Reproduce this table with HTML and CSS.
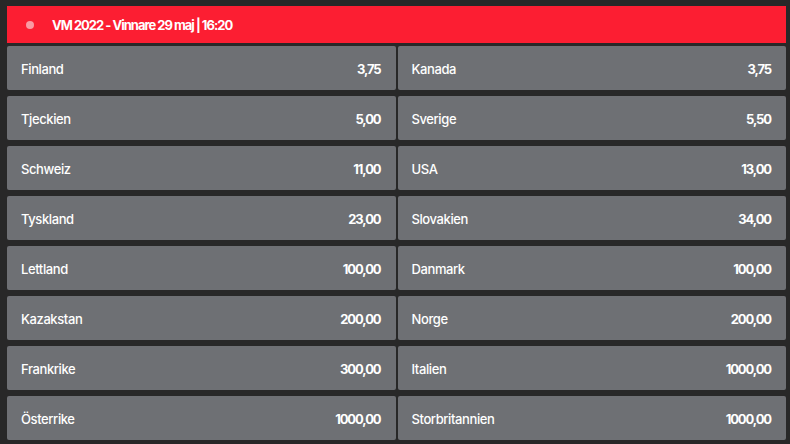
FILE: index.html
```html
<!DOCTYPE html>
<html lang="sv">
<head>
    <meta charset="UTF-8">
    <meta name="viewport" content="width=device-width, initial-scale=1.0">
    <title>VM 2022 - Vinnare</title>
    <link rel="stylesheet" href="styles.css">
</head>
<body>

<div class="marknad">
    <div class="rubrik">
        <span class="punkt"></span>
        <span>VM 2022 - Vinnare 29 maj | 16:20</span>
    </div>

    <div class="rad">
        <div class="val"><span>Finland</span><span class="odds">3,75</span></div>
        <div class="val"><span>Kanada</span><span class="odds">3,75</span></div>
    </div>
    <div class="rad">
        <div class="val"><span>Tjeckien</span><span class="odds">5,00</span></div>
        <div class="val"><span>Sverige</span><span class="odds">5,50</span></div>
    </div>
    <div class="rad">
        <div class="val"><span>Schweiz</span><span class="odds">11,00</span></div>
        <div class="val"><span>USA</span><span class="odds">13,00</span></div>
    </div>
    <div class="rad">
        <div class="val"><span>Tyskland</span><span class="odds">23,00</span></div>
        <div class="val"><span>Slovakien</span><span class="odds">34,00</span></div>
    </div>
    <div class="rad">
        <div class="val"><span>Lettland</span><span class="odds">100,00</span></div>
        <div class="val"><span>Danmark</span><span class="odds">100,00</span></div>
    </div>
    <div class="rad">
        <div class="val"><span>Kazakstan</span><span class="odds">200,00</span></div>
        <div class="val"><span>Norge</span><span class="odds">200,00</span></div>
    </div>
    <div class="rad">
        <div class="val"><span>Frankrike</span><span class="odds">300,00</span></div>
        <div class="val"><span>Italien</span><span class="odds">1000,00</span></div>
    </div>
    <div class="rad">
        <div class="val"><span>Österrike</span><span class="odds">1000,00</span></div>
        <div class="val"><span>Storbritannien</span><span class="odds">1000,00</span></div>
    </div>
</div>

</body>
</html>
```

FILE: styles.css
```css
* {
    box-sizing: border-box;
}

body {
    margin: 0;
    background: #282828;
    font-family: Inter, "Noto Sans", sans-serif;
    color: white;
    letter-spacing: -0.4px;
}

.marknad {
    padding: 6px 4px 0 7px;
    display: flex;
    flex-direction: column;
    gap: 6px;
}

.rubrik {
    background: #fc1e32;
    height: 37px;
    display: flex;
    align-items: center;
    padding-left: 19px;
    font-size: 13px;
    font-weight: 700;
    letter-spacing: -1px;
    margin-bottom: -3px;
}

.punkt {
    width: 8px;
    height: 8px;
    border-radius: 50%;
    background: #f99aa3;
    margin-right: 18px;
}

.rad {
    display: grid;
    grid-template-columns: 1fr 1fr;
    gap: 2px;
}

.val {
    background: #6e7074;
    height: 44px;
    border-radius: 2px;
    display: flex;
    justify-content: space-between;
    align-items: center;
    padding: 1px 15px 0 14px;
    font-size: 13px;
    font-weight: 500;
}

.odds {
    font-weight: 700;
    letter-spacing: -1.1px;
}
```
